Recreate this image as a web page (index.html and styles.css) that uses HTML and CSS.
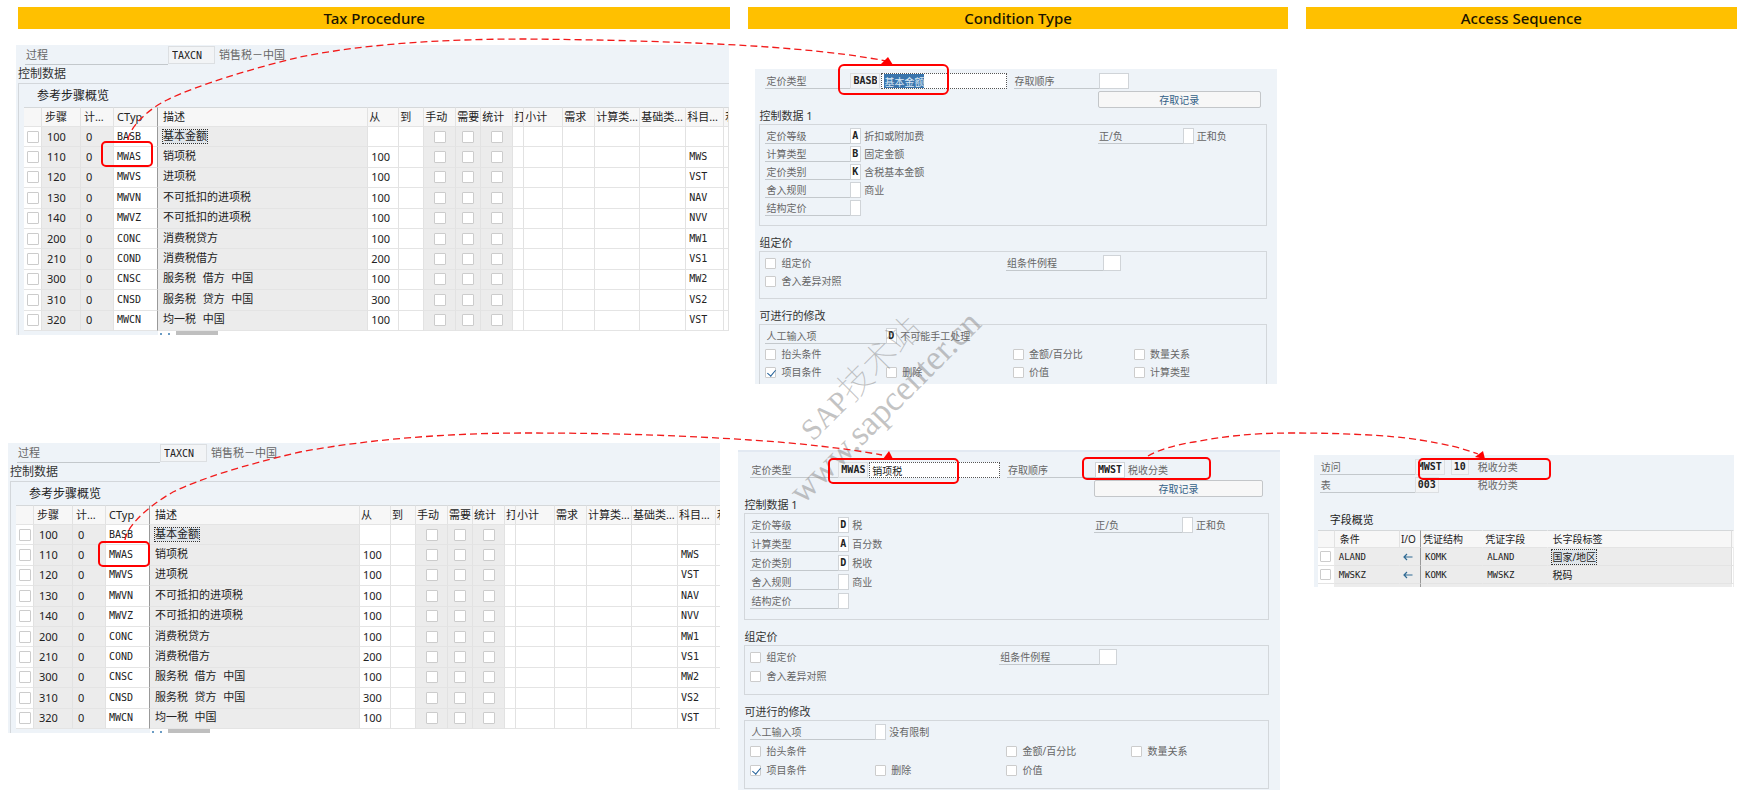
FILE: index.html
```html
<!DOCTYPE html>
<html lang="zh-CN">
<head>
<meta charset="utf-8">
<title>Tax Procedure</title>
<link rel="stylesheet" href="styles.css">
</head>
<body>
<main class="slide">
  <h2 class="band">Tax Procedure</h2>
  <h2 class="band">Condition Type</h2>
  <h2 class="band">Access Sequence</h2>

  <section class="panel procedure" data-procedure="p1"></section>
  <section class="panel condition" data-condition="c1"></section>
  <div class="empty"></div>

  <section class="panel procedure procedure-lower" data-procedure="p2"></section>
  <section class="panel condition condition-lower" data-condition="c2"></section>
  <section class="panel access">
    <div class="access-row">
      <label class="label" for="a-access">访问</label>
      <input class="field key w30" id="a-access" value="MWST" readonly>
      <input class="field key w18" value="10" aria-label="访问编号" readonly>
      <span class="note">税收分类</span>
    </div>
    <div class="access-row">
      <label class="label" for="a-table">表</label>
      <input class="field key w24" id="a-table" value="003" readonly>
      <span></span>
      <span class="note">税收分类</span>
    </div>
    <h3 class="access-title">字段概览</h3>
    <table class="grid access-grid">
      <colgroup><col style="width:17px"><col style="width:65px"><col style="width:21px"><col style="width:62px"><col style="width:65px"><col style="width:183px"><col style="width:2px"></colgroup>
      <thead><tr><th></th><th class="indent">条件</th><th class="io">I/O</th><th>凭证结构</th><th>凭证字段</th><th>长字段标签</th><th></th></tr></thead>
      <tbody>
        <tr><td class="pick"><input type="checkbox" aria-label="ALAND"></td><td class="code">ALAND</td><td class="io"><svg class="arrow" viewBox="0 0 10 8"><path d="M9.500 4H1M4 1L1 4L4 7"/></svg></td><td class="code pad">KOMK</td><td class="code pad">ALAND</td><td class="long"><span class="focus">国家/地区</span></td><td></td></tr>
        <tr><td class="pick"><input type="checkbox" aria-label="MWSKZ"></td><td class="code">MWSKZ</td><td class="io"><svg class="arrow" viewBox="0 0 10 8"><path d="M9.500 4H1M4 1L1 4L4 7"/></svg></td><td class="code pad">KOMK</td><td class="code pad">MWSKZ</td><td class="long">税码</td><td></td></tr>
        <tr class="cut"><td class="pick"></td><td></td><td></td><td></td><td></td><td></td><td></td></tr>
      </tbody>
    </table>
  </section>

  <svg class="overlay" viewBox="0 0 1747 797" preserveAspectRatio="none" aria-hidden="true">
    <g class="mark">
      <text transform="translate(813 442) rotate(-45)" font-size="34"><tspan font-size="30">SAP</tspan>技术站</text>
      <text transform="translate(803 505) rotate(-45)" font-size="35">www.sapcenter.cn</text>
    </g>
    <g class="link">
      <path d="M128 140C129 128 148 109 167 100C195 86 253 68 300 57C370 43 450 39 527 39C640 40 740 44 793 49C830 52 860 56 886 61"/>
      <path d="M125 540C126 528 145 508 173 492C200 479 240 466 300 452C370 439 450 433 527 433C620 433 690 436 750 440C800 443 850 449 882 455"/>
      <path d="M1148 456C1158 450 1175 445 1194 442C1220 437 1250 433 1290 433C1340 433 1390 435 1420 440C1445 444 1462 448 1478 454"/>
    </g>
    <g class="tip">
      <path d="M881 64L888 57L893 65Z"/>
      <path d="M883 459L889 451L893 459Z"/>
      <path d="M1475 457L1483 451L1485 459Z"/>
    </g>
    <g class="callout">
      <rect x="102" y="142" width="50" height="24" rx="4"/>
      <rect x="839" y="65" width="109" height="29" rx="5"/>
      <rect x="99" y="542" width="50" height="24" rx="4"/>
      <rect x="829" y="459" width="129" height="24" rx="4"/>
      <rect x="1083" y="458" width="127" height="21" rx="4"/>
      <rect x="1419" y="459" width="131" height="20" rx="4"/>
    </g>
  </svg>
</main>
<script src="script.js"></script>
</body>
</html>
```
FILE: styles.css
```css
* { box-sizing: border-box; }
body {
  margin: 0;
  background: #fff;
  color: #222;
  font: 11px/16px "Noto Sans", "Noto Sans CJK SC", sans-serif;
}
h2, h3 { margin: 0; font-weight: 400; }
input, button { font: inherit; margin: 0; border-radius: 0; }

.slide {
  position: relative;
  display: grid;
  grid-template-columns: 712fr 539fr 431fr;
  gap: 16px 18px;
  align-items: start;
  padding: 7px 10px 7px 18px;
}
.overlay { position: absolute; left: 0; top: 0; width: 100%; height: 797px; pointer-events: none; }
.link path { fill: none; stroke: #f21a1a; stroke-width: 1.3; stroke-dasharray: 7 4; }
.tip path { fill: #f00; }
.callout rect { fill: none; stroke: #f00; stroke-width: 2; }
.mark text { font-family: "Liberation Serif", "Noto Sans CJK SC", serif; font-weight: 100; fill: #888; fill-opacity: 0.5; }

.band {
  height: 22px;
  background: #ffc000;
  color: #1a1400;
  font: 500 15px/22px "Noto Sans", sans-serif;
  text-align: center;
}
.panel { background: #eef3f8; overflow: hidden; }

/* shared controls */
.label { align-self: stretch; border-bottom: 1px solid #c3c8cc; color: #666; padding-left: 1px; white-space: nowrap; }
.note { color: #666; white-space: nowrap; }
.field {
  height: 16px;
  padding: 0 2px;
  border: 1px solid #d0d4d8;
  background: #fff;
  color: #222;
  font-family: "DejaVu Sans Mono", monospace;
  font-size: 10px;
  font-weight: 700;
  outline: none;
}
.key { background: #f2f4f6; border-color: #dcdfe2; }
.w11 { width: 11px; padding: 0 1px; }
.w18 { width: 18px; }
.w24 { width: 24px; }
.w30 { width: 30px; }
input[type="checkbox"] {
  appearance: none;
  display: block;
  flex: none;
  width: 12px;
  height: 12px;
  border: 1px solid #ccc;
  border-radius: 1px;
  background: #fff;
}
.focus { outline: 1px dotted #333; background: #dfe5ea; }

/* tables */
.grid { width: 100%; table-layout: fixed; border-collapse: separate; border-spacing: 0; }
.grid th, .grid td {
  padding: 0 0 0 3px;
  border-right: 1px solid #e2e2e2;
  border-bottom: 1px solid #e4e4e4;
  background: #fff;
  overflow: hidden;
  white-space: nowrap;
  text-align: left;
  font-weight: 400;
  line-height: 16px;
}
.grid th { background: #f7f7f7; border-top: 1px solid #d5d8da; height: 20px; }
.grid .gray { background: #ececec; }
.grid .code { font-family: "DejaVu Sans Mono", monospace; font-size: 10px; padding-left: 3px; }
.grid .num { padding-left: 5px; }
.grid .from { padding-left: 3px; }
.grid td.text, .grid th.text { padding-left: 5px; }
.grid td.text { font-family: "DejaVu Sans Mono", "Noto Sans CJK SC", monospace; }
.grid .mark-col { border-right-color: #999; }
.grid .pick input { margin: 0 auto; }
.grid td.pick { padding: 0; }

/* tax procedure */
.procedure { margin: 0 1px 0 -2px; padding: 1px 0 0 2px; }
.procedure-lower { margin: 43px 10px 0 -10px; }
.procedure-head { display: grid; grid-template-columns: 143px 47px 1fr; height: 18px; padding-left: 7px; }
.procedure-head .field { height: 18px; padding: 0 3px; font-weight: 400; }
.procedure-head .label, .procedure-head .note { line-height: 18px; }
.procedure-head .note { padding-left: 4px; }
.procedure-title { font-size: 12px; line-height: 19px; color: #333; }
.procedure-body { border: solid #d3d7db; border-width: 1px 0 0 1px; padding-left: 5px; }
.procedure-sub { font-size: 12px; line-height: 23px; padding-left: 13px; }
.procedure .grid { height: 224px; }
.procedure .grid th { text-overflow: clip; }
.procedure .grid th.tight { padding-left: 1px; }
.procedure .grid td.type { padding-left: 3px; }
.scroller { display: grid; grid-template-columns: 134fr 571fr; height: 4px; }
.scroll-track { display: flex; gap: 6px; background: #fff; padding-left: 2px; }
.scroll-tick { width: 2px; height: 2px; margin-top: 2px; background: #6b9cc4; }
.scroll-thumb { width: 42px; height: 4px; background: #bfbfbf; }

/* condition type */
.condition {
  --row: 18px;
  --gap: 9px;
  height: 315px;
  margin: 24px 11px 0 7px;
  padding: 4px 10px 0 4px;
  font-size: 10px;
}
.condition-lower {
  --row: 19px;
  --gap: 9px;
  height: 340px;
  margin: 50px 8px 0 -10px;
  padding: 10px 11px 0 6px;
  border-top: 2px solid #e2e9f2;
}
.top-row, .detail-row, .group-row, .entry-row, .check-row { display: grid; height: var(--row); }
.top-row { grid-template-columns: 85fr 163fr 85fr 168fr; padding-left: 6px; height: 16px; }
.detail-row { grid-template-columns: 85fr 248fr 85fr 83fr; }
.group-row { grid-template-columns: 241fr 97fr 163fr; }
.entry-row { grid-template-columns: 121fr 380fr; }
.check-row { grid-template-columns: 121fr 127fr 121fr 132fr; }
.condition .label { height: 16px; align-self: start; }
.cell { display: flex; align-items: start; gap: 3px; min-width: 0; }
.top-row .cell { gap: 1px; padding-right: 7px; }
.top-row .cell .note { padding-left: 2px; }
.name { flex: 1; min-width: 0; border: 1px dotted #555; font: 10px/14px "Noto Sans CJK SC", sans-serif; }
.name::selection { background: #3a75ad; color: #dbe9f5; }
.button-row { display: grid; grid-template-columns: 333fr 163fr; padding: 2px 6px 0 6px; }
.button-row button {
  grid-column: 2;
  height: 17px;
  padding: 0;
  border: 1px solid #c3c6c9;
  border-radius: 2px;
  background: #f7f7f7;
  color: #346187;
  line-height: 14px;
}
.box-title { font-size: 11px; line-height: 16px; color: #333; padding-top: var(--gap); }
.box-title.first { padding-top: 0; }
.box { border: 1px solid #d3d7db; padding: 3px 0 7px 5px; }
.check { display: flex; align-items: center; gap: 5px; height: 16px; color: #666; white-space: nowrap; }
.condition .check input { width: 11px; height: 11px; }
.condition .check input:checked { position: relative; }
.condition .check input:checked::after {
  content: "";
  position: absolute;
  left: 3px;
  top: 0;
  width: 4px;
  height: 7px;
  border: solid #1f5f99;
  border-width: 0 1px 1px 0;
  transform: rotate(40deg);
}

/* access sequence */
.access { margin: 55px 3px 0 8px; padding-top: 4px; height: 132px; padding-left: 4px; font-size: 10px; }
.access-row { display: grid; grid-template-columns: 95px 36px 27px 1fr; height: 18px; padding-left: 2px; }
.access-row .label { height: 16px; }
.access-title { font-size: 11px; line-height: 16px; padding: 17px 0 2px 12px; color: #222; }
.access-grid th { height: 18px; line-height: 16px; padding-left: 2px; }
.access-grid th.io { padding-left: 1px; }
.access-grid td { height: 18px; background: #ececec; border-right-color: #ececec; }
.access-grid .cut td { height: 4px; }
.access-grid td.pick { background: #fff; }
.access-grid .pick input { width: 11px; height: 11px; }
.access-grid th.indent { padding-left: 5px; }
.access-grid .code { padding-left: 4px; font-size: 9px; }
.access-grid th:nth-child(n+4), .access-grid .code.pad { border-right-color: transparent; }
.access-grid th:nth-child(3), .access-grid td:nth-child(3) { border-right: 1px solid #999; }
.access-grid .long, .access-grid th:nth-child(6) { padding-left: 4px; border-right-color: #ddd; }
.access-grid td:last-child { background: #fff; }
.arrow { display: block; width: 10px; height: 8px; }
.arrow path { fill: none; stroke: #2f6a94; stroke-width: 1.2; }
```
FILE: script.js
```js
const columns = [
  [18, ""], [39, "步骤"], [33, "计…"], [44, "CTyp", "mark-col"], [210, "描述", "text"], [31, "从", "tight"],
  [25, "到", "tight"], [32, "手动", "tight"], [25, "需要", "tight"], [32, "统计", "tight"], [11, "打", "tight"], [39, "小计", "tight"],
  [32, "需求", "tight"], [45, "计算类…", "tight"], [46, "基础类…", "tight"], [38, "科目…", "tight"], [5, "利", "tight"]
];
const steps = [
  ["100", "BASB", "基本金额", "", ""],
  ["110", "MWAS", "销项税", "100", "MWS"],
  ["120", "MWVS", "进项税", "100", "VST"],
  ["130", "MWVN", "不可抵扣的进项税", "100", "NAV"],
  ["140", "MWVZ", "不可抵扣的进项税", "100", "NVV"],
  ["200", "CONC", "消费税贷方", "100", "MW1"],
  ["210", "COND", "消费税借方", "200", "VS1"],
  ["300", "CNSC", "服务税 借方 中国", "100", "MW2"],
  ["310", "CNSD", "服务税 贷方 中国", "300", "VS2"],
  ["320", "MWCN", "均一税 中国", "100", "VST"]
];

function procedure(id) {
  const cols = columns.map(([w]) => `<col style="width:${w}px">`).join("");
  const heads = columns.map(([w, t, cls = ""]) => `<th class="${cls}">${t}</th>`).join("");
  const rows = steps.map(([step, type, text, from, account], r) => {
    const flag = name => `<td class="pick gray"><input type="checkbox" aria-label="${step} ${name}"></td>`;
    return `<tr><td class="pick"><input type="checkbox" aria-label="${step}"></td>
      <td class="num gray">${step}</td><td class="num gray">0</td><td class="code type mark-col">${type}</td>
      <td class="text gray">${r ? text : `<span class="focus">${text}</span>`}</td><td class="num from">${from}</td><td></td>
      ${flag("手动")}${flag("需要")}${flag("统计")}
      <td></td><td></td><td></td><td></td><td></td><td class="code">${account}</td><td></td></tr>`;
  }).join("");
  return `<div class="procedure-head">
      <label class="label" for="${id}-proc">过程</label>
      <input class="field key" id="${id}-proc" value="TAXCN" readonly>
      <span class="note">销售税－中国</span>
    </div>
    <h3 class="procedure-title">控制数据</h3>
    <div class="procedure-body">
      <h3 class="procedure-sub">参考步骤概览</h3>
      <table class="grid"><colgroup>${cols}</colgroup><thead><tr>${heads}</tr></thead><tbody>${rows}</tbody></table>
      <div class="scroller"><span></span><div class="scroll-track"><span class="scroll-tick"></span><span class="scroll-tick"></span><div class="scroll-thumb"></div></div></div>
    </div>`;
}

const conditions = {
  c1: {
    type: "BASB", name: "基本金额", access: "", accessText: "",
    details: [["定价等级", "A", "折扣或附加费"], ["计算类型", "B", "固定金额"], ["定价类别", "K", "含税基本金额"], ["舍入规则", "", "商业"], ["结构定价", "", ""]],
    entry: "D", entryText: "不可能手工处理", lastCheck: "计算类型"
  },
  c2: {
    type: "MWAS", name: "销项税", access: "MWST", accessText: "税收分类",
    details: [["定价等级", "D", "税"], ["计算类型", "A", "百分数"], ["定价类别", "D", "税收"], ["舍入规则", "", "商业"], ["结构定价", "", ""]],
    entry: "", entryText: "没有限制", lastCheck: ""
  }
};

function condition(id) {
  const c = conditions[id];
  const check = (text, on) => text ? `<label class="check"><input type="checkbox"${on ? " checked" : ""}>${text}</label>` : "<span></span>";
  const pair = (key, label, value, note, size = "w11") =>
    `<label class="label" for="${id}-${key}">${label}</label>
     <div class="cell"><input class="field ${size}" id="${id}-${key}" value="${value}"><span class="note">${note}</span></div>`;
  const details = c.details.map(([label, value, note], i) =>
    `<div class="detail-row">${pair("d" + i, label, value, note)}${i ? "" : pair("sign", "正/负", "", "正和负")}</div>`).join("");
  return `<div class="top-row">
      <label class="label" for="${id}-type">定价类型</label>
      <div class="cell"><input class="field key w30" id="${id}-type" value="${c.type}" readonly><input class="field name" id="${id}-name" aria-label="名称" value="${c.name}"></div>
      ${pair("access", "存取顺序", c.access, c.accessText, "w30")}
    </div>
    <div class="button-row"><button type="button">存取记录</button></div>
    <h3 class="box-title first">控制数据 1</h3>
    <div class="box">${details}</div>
    <h3 class="box-title">组定价</h3>
    <div class="box">
      <div class="group-row">${check("组定价")}${pair("routine", "组条件例程", "", "", "w18")}</div>
      <div class="group-row">${check("舍入差异对照")}</div>
    </div>
    <h3 class="box-title">可进行的修改</h3>
    <div class="box">
      <div class="entry-row">${pair("entry", "人工输入项", c.entry, c.entryText)}</div>
      <div class="check-row">${check("抬头条件")}${check("")}${check("金额/百分比")}${check("数量关系")}</div>
      <div class="check-row">${check("项目条件", true)}${check("删除")}${check("价值")}${check(c.lastCheck)}</div>
    </div>`;
}

document.querySelectorAll("[data-procedure]").forEach(el => { el.innerHTML = procedure(el.dataset.procedure); });
document.querySelectorAll("[data-condition]").forEach(el => { el.innerHTML = condition(el.dataset.condition); });

const active = document.getElementById("c1-name");
active.focus();
active.select();
```
